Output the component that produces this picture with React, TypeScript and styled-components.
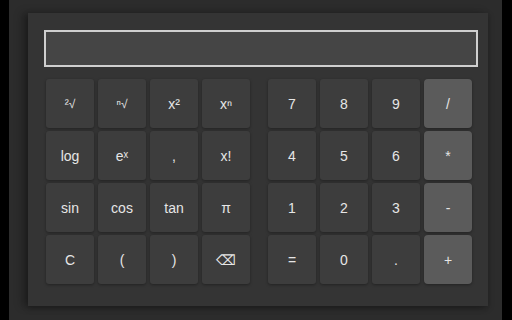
import styled, { createGlobalStyle } from "styled-components";

const GlobalStyle = createGlobalStyle`
  html, body {
    margin: 0;
    padding: 0;
    background: #000;
    overflow: hidden;
  }
  body {
    font-family: "Liberation Sans", Arial, sans-serif;
  }
`;

const Frame = styled.div`
  margin-left: 9px;
  width: 493px;
  height: 330px;
  box-sizing: border-box;
  padding: 13px 14px 0 19px;
  background: #2c2c2c;
`;

const Panel = styled.div`
  width: 460px;
  height: 293px;
  box-sizing: border-box;
  padding: 17px 10px 0 16px;
  background: #343434;
  box-shadow: -6px 0 8px rgba(0, 0, 0, 0.25), 0 2px 6px rgba(0, 0, 0, 0.3);
`;

const Display = styled.div`
  width: 434px;
  height: 37px;
  box-sizing: border-box;
  border: 2px solid #cfcfcf;
  background: #454545;
`;

const Keypad = styled.div`
  display: flex;
  gap: 18px;
  margin-top: 12px;
  padding-left: 2px;
`;

const Group = styled.div`
  display: grid;
  grid-template-columns: repeat(4, 48px);
  grid-auto-rows: 49px;
  column-gap: 4px;
  row-gap: 3px;
`;

const Key = styled.button<{ $op?: boolean }>`
  border: none;
  padding: 0;
  margin: 0;
  border-radius: ${(p) => (p.$op ? "4px" : "3px")};
  background: ${(p) => (p.$op ? "#5b5b5b" : "#3d3d3d")};
  color: #e6e6e6;
  font-family: "Liberation Sans", Arial, sans-serif;
  font-size: 14px;
  display: flex;
  align-items: center;
  justify-content: center;
  box-shadow: 0 1px 3px rgba(0, 0, 0, 0.35);
  cursor: pointer;
`;

const Small = styled.span`
  font-size: 12px;
`;

const left: { label: React.ReactNode }[] = [
  { label: <Small>²√</Small> },
  { label: <Small>ⁿ√</Small> },
  { label: "x²" },
  { label: "xⁿ" },
  { label: "log" },
  { label: "eˣ" },
  { label: "," },
  { label: "x!" },
  { label: "sin" },
  { label: "cos" },
  { label: "tan" },
  { label: "π" },
  { label: "C" },
  { label: "(" },
  { label: ")" },
  { label: "⌫" },
];

const right = ["7", "8", "9", "/", "4", "5", "6", "*", "1", "2", "3", "-", "=", "0", ".", "+"];

export default function App() {
  return (
    <>
      <GlobalStyle />
      <Frame>
        <Panel>
          <Display />
          <Keypad>
            <Group>
              {left.map((k, i) => (
                <Key key={i}>{k.label}</Key>
              ))}
            </Group>
            <Group>
              {right.map((k, i) => (
                <Key key={k} $op={i % 4 === 3}>
                  {k}
                </Key>
              ))}
            </Group>
          </Keypad>
        </Panel>
      </Frame>
    </>
  );
}
